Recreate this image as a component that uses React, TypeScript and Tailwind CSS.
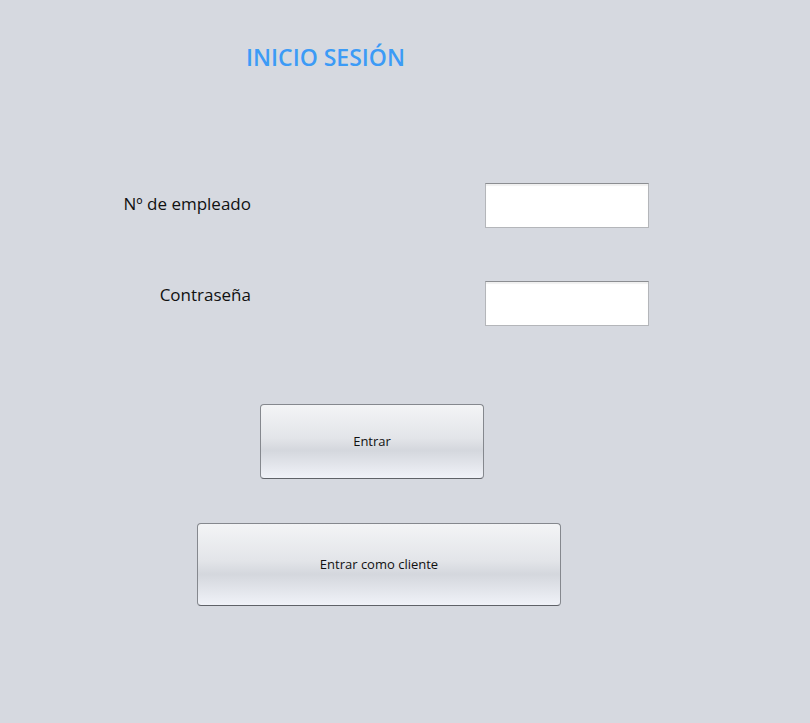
export default function App() {
  const font = { fontFamily: '"Open Sans", "Noto Sans", sans-serif' }
  const btn =
    "rounded-[4px] border border-[#85888e] border-b-[#5f6268] bg-[linear-gradient(to_bottom,#f3f4f6_0%,#e3e5e9_45%,#d4d7dd_62%,#f0f2f8_100%)] text-[13px] text-[#111] flex items-center justify-center pt-[1px]"
  const input =
    "w-[164px] h-[45px] bg-white border border-[#b4b6ba] border-t-[#8c8e92] shadow-[inset_0_2px_1px_rgba(0,0,0,0.06)]"

  return (
    <div className="w-[810px] h-[723px] bg-[#d6d9e0] flex flex-col" style={font}>
      <h1 className="ml-[246px] mt-[42px] text-[23px] font-semibold text-[#3c9bf6] leading-[30px]">
        INICIO SESIÓN
      </h1>

      <div className="flex mt-[111px]">
        <div className="w-[251px] text-right text-[17px] text-[#111] leading-[24px] mt-[9px]">
          Nº de empleado
        </div>
        <div className={"ml-[234px] " + input} />
      </div>

      <div className="flex mt-[53px]">
        <div className="w-[251px] text-right text-[17px] text-[#111] leading-[24px] mt-[2px]">
          Contraseña
        </div>
        <div className={"ml-[234px] " + input} />
      </div>

      <button className={"ml-[260px] mt-[78px] w-[224px] h-[75px] " + btn}>Entrar</button>

      <button className={"ml-[197px] mt-[44px] w-[364px] h-[83px] " + btn}>
        Entrar como cliente
      </button>
    </div>
  )
}
